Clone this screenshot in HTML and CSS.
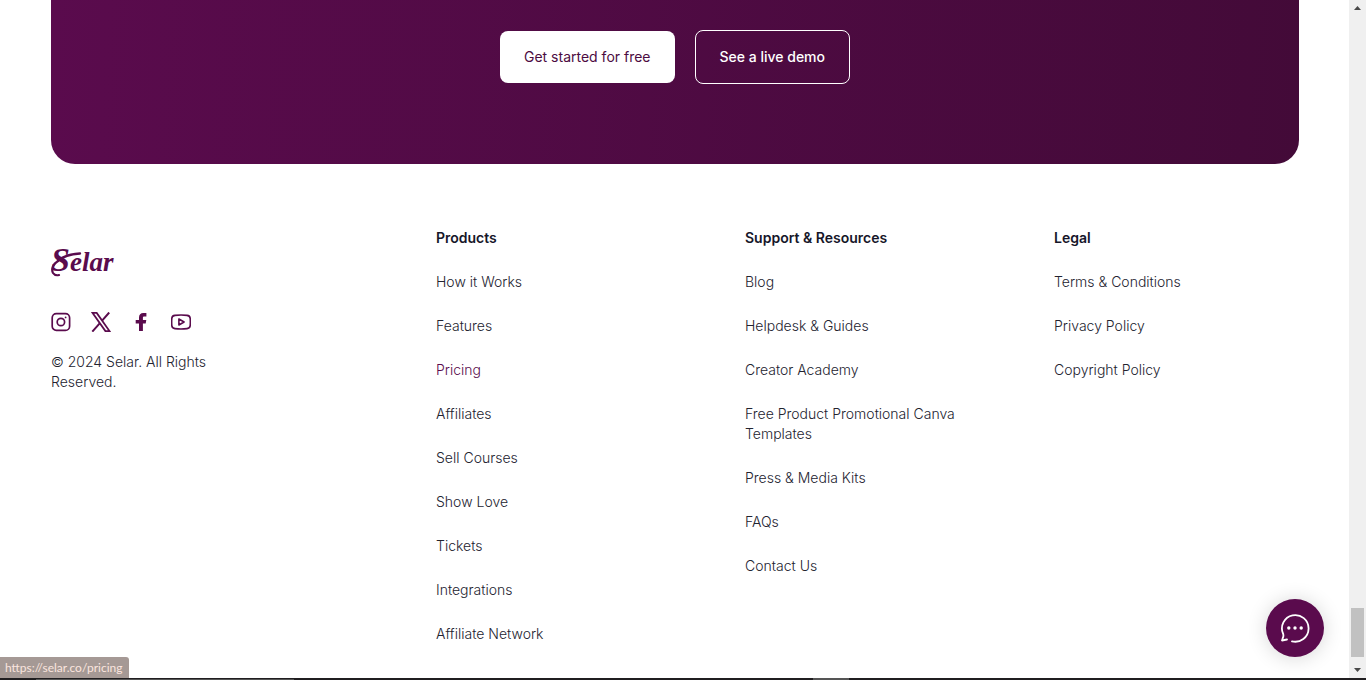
FILE: index.html
```html
<!DOCTYPE html>
<html lang="en">
<head>
<meta charset="utf-8">
<meta name="viewport" content="width=device-width, initial-scale=1">
<title>Selar</title>
<link rel="stylesheet" href="styles.css">
</head>
<body>
<div class="page">
  <main class="content">
    <section class="banner">
      <button class="btn btn-light" type="button">Get started for free</button>
      <button class="btn btn-outline" type="button">See a live demo</button>
    </section>
    <footer class="footer">
      <div class="brand">
        <a class="logo" href="#"><span class="logo-initial">S</span>elar<svg class="flourish" viewBox="0 0 64 36" fill="none" stroke="currentColor" stroke-linecap="round" aria-hidden="true"><path d="M7 19C11 15 19 12 29 11.500" stroke-width="2.400"/><path d="M7 19C2 22 0 27 2 31q2 3 6 2" stroke-width="2.200"/></svg></a>
        <div class="social">
          <a href="#" aria-label="Instagram"><svg viewBox="0 0 20 20" fill="none" stroke="currentColor" stroke-width="1.7"><rect x="1.2" y="1.6" width="17.4" height="16.8" rx="4.2"/><circle cx="9.9" cy="10" r="3.7"/><circle cx="14.6" cy="5.4" r=".9" fill="currentColor" stroke="none"/></svg></a>
          <a href="#" aria-label="X"><svg viewBox="0 0 20 20" fill="none" stroke="currentColor" stroke-width="1.8"><path d="M1.600.9h4.100l12.800 18.200h-4.100z"/><path d="M18.200.5l-7.100 8.200M8.700 11.400L1.300 19.600" stroke-width="2"/></svg></a>
          <a href="#" aria-label="Facebook"><svg viewBox="0 0 20 20" fill="currentColor"><path d="M8 19v-7.600H4.700V7.900H8V5.400C8 2.600 9.700 1 12.200 1h3.200v3.600h-2c-1.100 0-1.500.5-1.500 1.400v1.900h3.400l-.6 3.500h-2.800V19z"/></svg></a>
          <a href="#" aria-label="YouTube"><svg viewBox="0 0 20 20" fill="none" stroke="currentColor" stroke-width="1.6" stroke-linejoin="round"><path d="M4 3.400Q10 2.700 16 3.400q3 .3 3.200 3 .3 3.600 0 7.200-.2 2.700-3.200 3-6 .7-12 0-3-.3-3.200-3-.3-3.600 0-7.200.2-2.700 3.200-3z"/><path d="M7.900 7v6l5.200-3z"/></svg></a>
        </div>
        <p class="copyright">© 2024 Selar. All Rights Reserved.</p>
      </div>
      <nav class="column" aria-labelledby="products">
        <h2 id="products">Products</h2>
        <ul>
          <li><a href="#">How it Works</a></li>
          <li><a href="#">Features</a></li>
          <li><a class="current" href="#">Pricing</a></li>
          <li><a href="#">Affiliates</a></li>
          <li><a href="#">Sell Courses</a></li>
          <li><a href="#">Show Love</a></li>
          <li><a href="#">Tickets</a></li>
          <li><a href="#">Integrations</a></li>
          <li><a href="#">Affiliate Network</a></li>
        </ul>
      </nav>
      <nav class="column" aria-labelledby="support">
        <h2 id="support">Support &amp; Resources</h2>
        <ul>
          <li><a href="#">Blog</a></li>
          <li><a href="#">Helpdesk &amp; Guides</a></li>
          <li><a href="#">Creator Academy</a></li>
          <li><a href="#">Free Product Promotional Canva Templates</a></li>
          <li><a href="#">Press &amp; Media Kits</a></li>
          <li><a href="#">FAQs</a></li>
          <li><a href="#">Contact Us</a></li>
        </ul>
      </nav>
      <nav class="column" aria-labelledby="legal">
        <h2 id="legal">Legal</h2>
        <ul>
          <li><a href="#">Terms &amp; Conditions</a></li>
          <li><a href="#">Privacy Policy</a></li>
          <li><a href="#">Copyright Policy</a></li>
        </ul>
      </nav>
    </footer>
  </main>
  <div class="scrollbar" aria-hidden="true">
    <svg class="arrow" viewBox="0 0 17 17"><path d="M5 10h7L8.500 6z"/></svg>
    <div class="thumb"></div>
    <svg class="arrow" viewBox="0 0 17 17"><path d="M5 7h7L8.500 11z"/></svg>
  </div>
</div>
<button class="chat" type="button" aria-label="Open chat">
  <svg viewBox="0 0 30 30" fill="none" stroke="currentColor" stroke-width="1.8" stroke-linecap="round" stroke-linejoin="round"><path d="M12 28.300A13.300 13.300 0 1 0 3.200 21Q3.800 23 2.800 25L2 27.500 7 26.500"/><g fill="currentColor" stroke="none"><circle cx="8.800" cy="15" r="1.700"/><circle cx="15" cy="15" r="1.700"/><circle cx="21.200" cy="15" r="1.700"/></g></svg>
</button>
<div class="status">https://selar.co/pricing</div>
<div class="taskbar"><span class="task task-search"></span><span class="task task-active"></span></div>
</body>
</html>
```
FILE: styles.css
```css
* { box-sizing: border-box; }

body {
  margin: 0;
  background: #fff;
  color: #23232f;
  font: 300 14px/20px Inter, "Open Sans", sans-serif;
}

a { color: inherit; text-decoration: none; }
button { font: inherit; cursor: pointer; }
svg { display: block; }

.page { display: flex; min-height: 100vh; padding-bottom: 2px; }
.content { flex: 1; padding: 0 50px 0 51px; }

.banner {
  display: flex;
  align-items: center;
  justify-content: center;
  gap: 20px;
  padding: 30px 24px 80px;
  border-radius: 0 0 24px 24px;
  background: linear-gradient(93deg, #5a0b4d, #430a38);
}
.btn { padding: 16px 24px; border-radius: 8px; }
.btn-light { min-height: 52px; border: 0; background: #fff; color: #4c0b41; font-weight: 400; }
.btn-outline { min-height: 54px; border: 1px solid #fff; background: none; color: #fff; font-weight: 500; }

.footer {
  display: grid;
  grid-template-columns: 321fr 245fr 245fr 245fr;
  gap: 64px;
  padding-top: 64px;
}

.brand { padding-top: 14px; }
.logo {
  position: relative;
  display: block;
  width: 64px;
  height: 36px;
  color: #5a0b4d;
  font: italic bold 27px/36px "Liberation Serif", serif;
}
.logo-initial { font-size: 34px; line-height: 36px; }
.flourish { position: absolute; inset: 0; width: 64px; height: 36px; }
.social { display: flex; gap: 20px; padding: 34px 0 20px; color: #5a0b4d; }
.social svg { width: 20px; height: 20px; }
.copyright { max-width: 170px; margin: 0; }

.column h2 { margin: 0 0 24px; color: #161629; font-size: 14px; line-height: 20px; font-weight: 600; }
.column ul { display: grid; gap: 24px; margin: 0; padding: 0; list-style: none; }
.current { color: #5a0b4d; }

.scrollbar { display: flex; flex-direction: column; width: 17px; background: #f0f0f0; }
.arrow { width: 17px; height: 17px; fill: #484848; }
.thumb { height: 49px; margin: auto 2px 4px; background: #c1c1c1; }

.chat {
  position: fixed;
  right: 42px;
  bottom: 23px;
  display: grid;
  place-items: center;
  width: 58px;
  height: 58px;
  padding: 0;
  border: 0;
  border-radius: 50%;
  background: #5a0b4d;
  color: #fff;
  box-shadow: 0 1px 20px rgba(0, 0, 0, .16);
}
.chat svg { width: 30px; height: 30px; }

.status {
  position: fixed;
  left: 0;
  bottom: 2px;
  padding: 1px 6px 0 5px;
  border-radius: 0 3px 0 0;
  background: #a59995;
  color: #fbe5df;
  font: 400 12px/20px Lato, sans-serif;
}

.taskbar { position: fixed; left: 0; right: 0; bottom: 0; display: flex; height: 2px; padding-left: 36px; background: #201e20; }
.task { height: 1px; background: #555; }
.task-search { width: 258px; margin-top: 1px; }
.task-active { width: 36px; height: 2px; margin-left: 519px; }
```
